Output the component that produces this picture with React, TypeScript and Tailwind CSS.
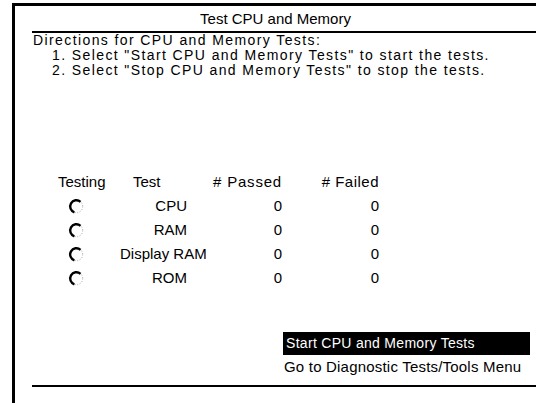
import React from "react";

const rows = [
  { test: "CPU", passed: 0, failed: 0 },
  { test: "RAM", passed: 0, failed: 0 },
  { test: "Display RAM", passed: 0, failed: 0 },
  { test: "ROM", passed: 0, failed: 0 },
];

const RadioMark = () => (
  <svg width="17" height="17" viewBox="0 0 17 17">
    <circle cx="8.5" cy="8.5" r="6.2" fill="none" stroke="#a3a3a3" strokeWidth="1" strokeDasharray="1 1.6" />
    <path d="M 12.5 3.8 A 6.2 6.2 0 1 0 6.4 14.3" fill="none" stroke="#000" strokeWidth="2.4" />
  </svg>
);

const App = () => {
  return (
    <div
      className="w-[536px] h-[403px] bg-white overflow-hidden pl-[12px] pt-[3px] text-black"
      style={{ fontFamily: '"Liberation Sans", Arial, sans-serif' }}
    >
      <div className="h-[400px] border-l-[3px] border-t-[3px] border-black flex flex-col">
        <div className="h-[25px] flex items-center justify-center text-[15px] leading-none">
          Test CPU and Memory
        </div>
        <div className="ml-[17px] border-b-2 border-black" />
        <div className="pl-[18px] text-[14px] leading-[15px] tracking-[1.4px] whitespace-nowrap">
          <p>Directions for CPU and Memory Tests:</p>
          <p className="pl-[19px]">1. Select "Start CPU and Memory Tests" to start the tests.</p>
          <p className="pl-[19px]">2. Select "Stop CPU and Memory Tests" to stop the tests.</p>
        </div>

        <div className="mt-[92px] pl-[43px] text-[15px] whitespace-nowrap">
          <div className="flex h-[24px] items-center">
            <div className="w-[62px]">Testing</div>
            <div className="w-[67px] pl-[13px]">Test</div>
            <div className="w-[95px] text-right tracking-[0.8px]">{"# Passed"}</div>
            <div className="w-[97px] text-right tracking-[0.5px]">{"# Failed"}</div>
          </div>
          {rows.map((r) => (
            <div key={r.test} className="flex h-[24px] items-center">
              <div className="w-[62px] pl-[10px] flex items-center">
                <RadioMark />
              </div>
              <div className="w-[67px] text-right">{r.test}</div>
              <div className="w-[95px] text-right">{r.passed}</div>
              <div className="w-[97px] text-right">{r.failed}</div>
            </div>
          ))}
        </div>

        <div className="mt-[42px] ml-[268px] w-[247px] whitespace-nowrap">
          <div className="h-[23px] bg-black text-white flex items-center pl-[3px] text-[14px] tracking-[0.3px]">
            Start CPU and Memory Tests
          </div>
          <div className="h-[25px] flex items-center pl-[1px] text-[15px] tracking-[0.2px]">
            Go to Diagnostic Tests/Tools Menu
          </div>
        </div>
        <div className="mt-[5px] ml-[17px] border-b-2 border-black" />
      </div>
    </div>
  );
};

export default App;
